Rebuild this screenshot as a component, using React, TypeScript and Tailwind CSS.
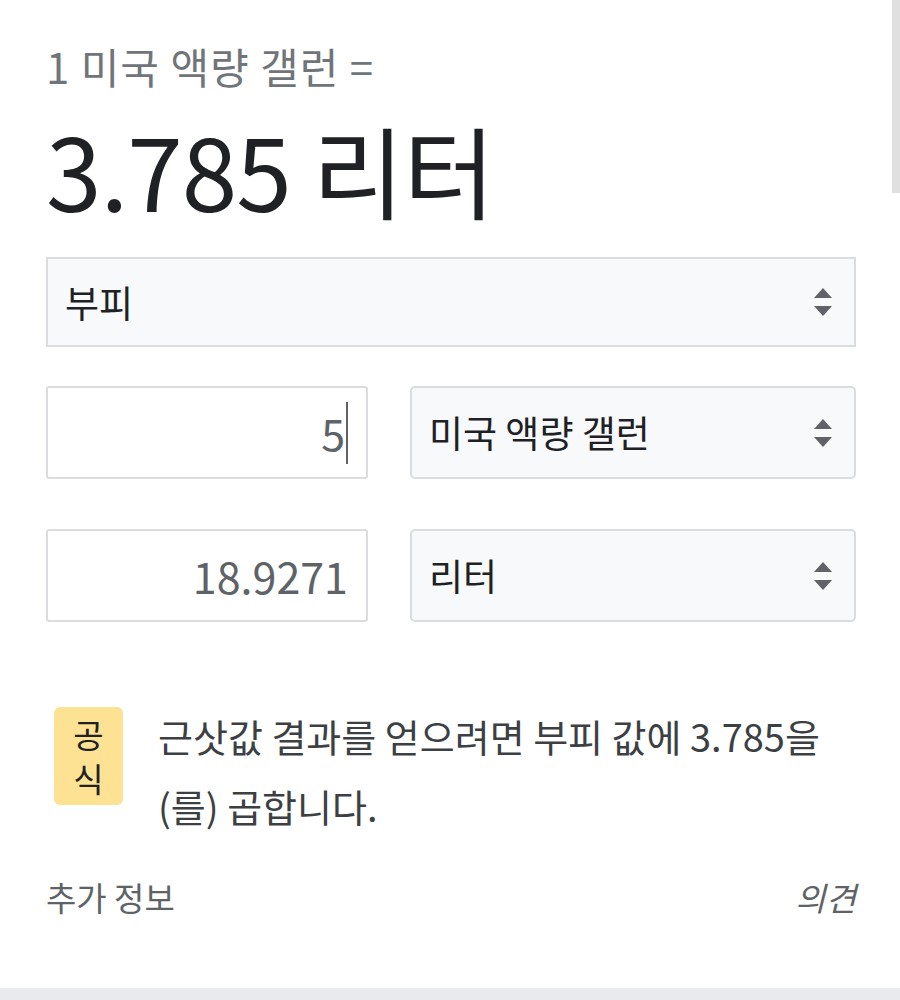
const FONT = "font-['Noto_Sans_CJK_KR','Noto_Sans',sans-serif]";

function SortArrows() {
  return (
    <svg width="22" height="34" viewBox="0 0 22 34" className="shrink-0">
      <path d="M11 3 L20 13 L2 13 Z" fill="#5f6368" />
      <path d="M2 21 L20 21 L11 31 Z" fill="#5f6368" />
    </svg>
  );
}

function UnitSelect({ label, rounded = false }: { label: string; rounded?: boolean }) {
  return (
    <div
      className={`flex items-center justify-between h-full pl-[17px] pr-[20px] bg-[#f8f9fa] border-2 border-[#dadce0] ${
        rounded ? "rounded-[5px]" : ""
      }`}
    >
      <span className="text-[37px] text-[#202124] leading-none">{label}</span>
      <SortArrows />
    </div>
  );
}

function ValueBox({ value, caret = false }: { value: string; caret?: boolean }) {
  return (
    <div className="flex items-center justify-end h-full pr-[18px] bg-white border-2 border-[#dadce0] rounded-[3px]">
      <span className="text-[43px] text-[#5f6368] leading-none">{value}</span>
      {caret && <span className="w-[2px] h-[62px] bg-[#5f6368] ml-[1px]" />}
    </div>
  );
}

export default function App() {
  return (
    <div className={`relative w-[900px] h-[1000px] bg-white overflow-hidden ${FONT}`}>
      <div className="absolute right-0 top-0 w-[8px] h-[193px] bg-[#e0e0e0]" />

      <div className="pl-[46px] pr-[44px] pt-[40px]">
        <div className="text-[42px] leading-[52px] text-[#70757a] tracking-[1px]">1 미국 액량 갤런 =</div>
        <div className="mt-[22px] text-[100px] leading-[110px] text-[#202124] tracking-[-1px]">
          3.785 리터
        </div>

        <div className="mt-[33px] h-[90px]">
          <UnitSelect label="부피" />
        </div>

        <div className="mt-[39px] flex gap-[42px] h-[93px]">
          <div className="w-[322px]">
            <ValueBox value="5" caret />
          </div>
          <div className="flex-1">
            <UnitSelect label="미국 액량 갤런" rounded />
          </div>
        </div>

        <div className="mt-[50px] flex gap-[42px] h-[93px]">
          <div className="w-[322px]">
            <ValueBox value="18.9271" />
          </div>
          <div className="flex-1">
            <UnitSelect label="리터" rounded />
          </div>
        </div>

        <div className="mt-[85px] flex items-start gap-[35px]">
          <div className="ml-[8px] w-[69px] h-[98px] rounded-[6px] bg-[#fde293] flex flex-col items-center justify-center gap-[8px] text-[33px] leading-[36px] text-[#202124] shrink-0">
            <span>공</span>
            <span>식</span>
          </div>
          <div className="text-[38px] leading-[70px] text-[#3c4043] -mt-[6px]">
            근삿값 결과를 얻으려면 부피 값에 3.785을(를) 곱합니다.
          </div>
        </div>

        <div className="mt-[32px] flex justify-between items-center">
          <span className="text-[33px] text-[#5f6368]">추가 정보</span>
          <span className="text-[33px] text-[#5f6368] italic">의견</span>
        </div>
      </div>

      <div className="absolute left-0 bottom-0 w-full h-[12px] bg-[#e8eaed]" />
    </div>
  );
}
